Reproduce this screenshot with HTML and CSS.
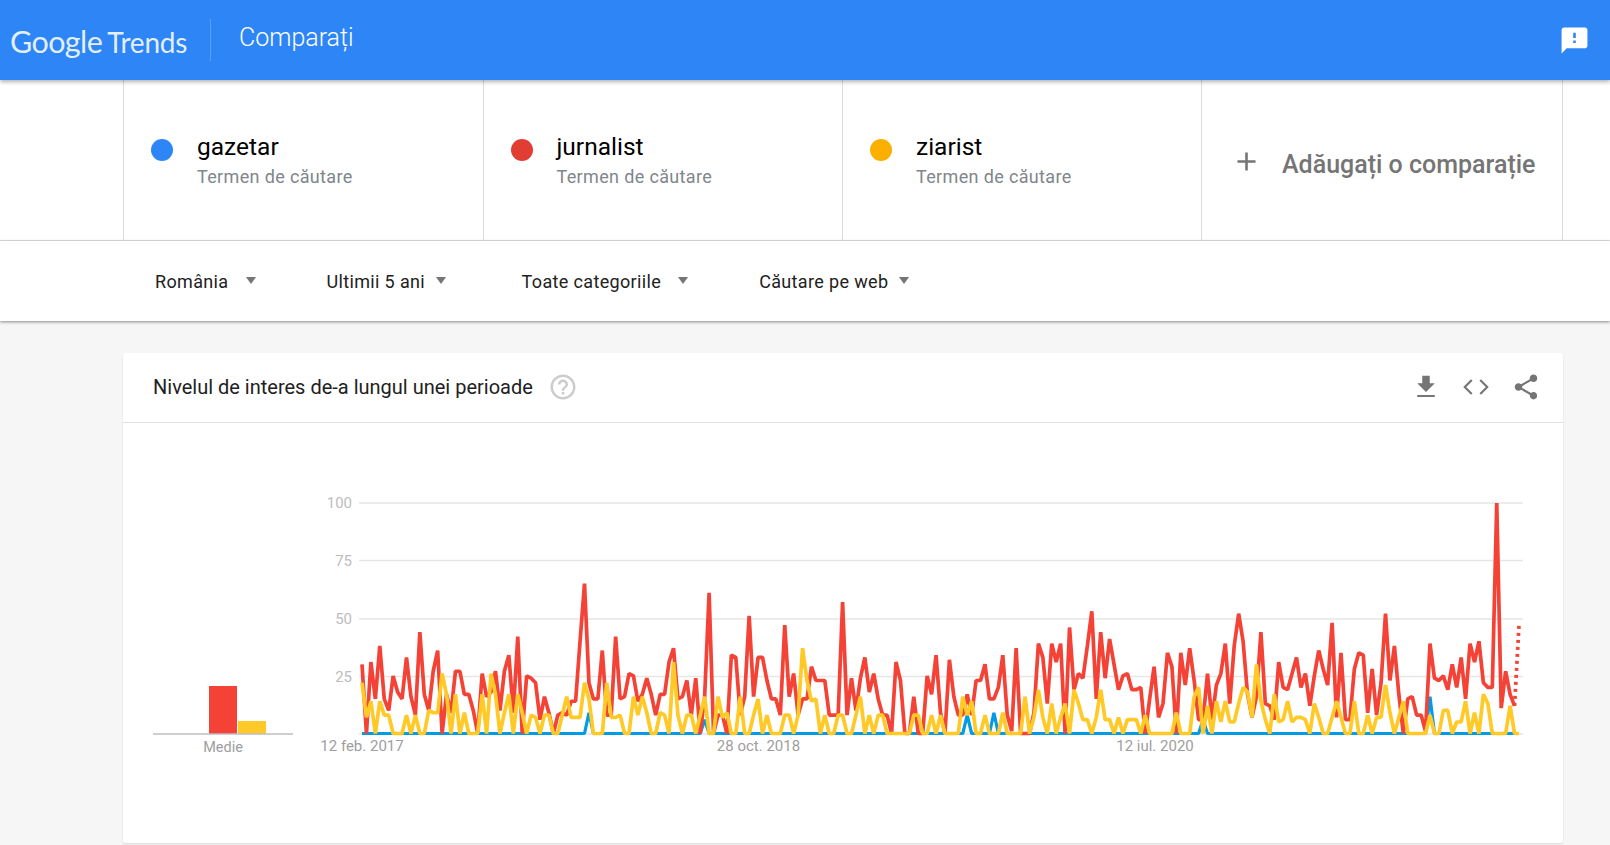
FILE: index.html
```html
<!DOCTYPE html>
<html lang="ro">
<head>
<meta charset="utf-8">
<title>Comparați - Google Trends</title>
<link rel="stylesheet" href="styles.css">
</head>
<body>
<header class="topbar">
  <div class="logo"><span class="logo-google">Google</span><span class="logo-trends">Trends</span></div>
  <div class="topbar-divider"></div>
  <h1 class="topbar-title">Comparați</h1>
  <svg class="feedback-icon" viewBox="0 0 24 24"><path d="M20 2H4c-1.1 0-1.99.9-1.99 2L2 22l4-4h14c1.1 0 2-.9 2-2V4c0-1.1-.9-2-2-2zm-7 12h-2v-2h2v2zm0-4h-2V6h2v4z"/></svg>
</header>

<section class="terms">
  <div class="term-row">
    <div class="term">
      <span class="dot dot-blue"></span>
      <div class="term-text"><div class="term-name">gazetar</div><div class="term-type">Termen de căutare</div></div>
    </div>
    <div class="term">
      <span class="dot dot-red"></span>
      <div class="term-text"><div class="term-name">jurnalist</div><div class="term-type">Termen de căutare</div></div>
    </div>
    <div class="term">
      <span class="dot dot-yellow"></span>
      <div class="term-text"><div class="term-name">ziarist</div><div class="term-type">Termen de căutare</div></div>
    </div>
    <div class="term term-add">
      <svg class="add-icon" viewBox="0 0 24 24"><path d="M19 13h-6v6h-2v-6H5v-2h6V5h2v6h6v2z"/></svg>
      <span class="add-label">Adăugați o comparație</span>
    </div>
  </div>
</section>

<nav class="filters">
  <div class="filter"><span>România</span><i class="arrow"></i></div>
  <div class="filter filter-tight"><span>Ultimii 5 ani</span><i class="arrow"></i></div>
  <div class="filter"><span>Toate categoriile</span><i class="arrow"></i></div>
  <div class="filter filter-tight"><span>Căutare pe web</span><i class="arrow"></i></div>
</nav>

<main class="content">
  <article class="card">
    <div class="card-head">
      <h2 class="card-title">Nivelul de interes de-a lungul unei perioade</h2>
      <svg class="help-icon" viewBox="0 0 24 24"><path d="M11 18h2v-2h-2v2zm1-16C6.48 2 2 6.48 2 12s4.48 10 10 10 10-4.48 10-10S17.52 2 12 2zm0 18c-4.41 0-8-3.59-8-8s3.59-8 8-8 8 3.59 8 8-3.59 8-8 8zm0-14c-2.21 0-4 1.79-4 4h2c0-1.1.9-2 2-2s2 .9 2 2c0 2-3 1.75-3 5h2c0-2.25 3-2.5 3-5 0-2.21-1.79-4-4-4z"/></svg>
      <div class="card-actions">
        <svg class="action-icon" viewBox="0 0 24 24"><path d="M19 9h-4V3H9v6H5l7 7 7-7zM5 18.4v1.6h14v-1.6H5z"/></svg>
        <svg class="action-icon" viewBox="0 0 24 24"><path class="code-stroke" d="M8.6 6.4L3 12l5.6 5.6M15.4 6.4L21 12l-5.6 5.6"/></svg>
        <svg class="action-icon" viewBox="0 0 24 24"><path d="M18 16.08c-.76 0-1.44.3-1.96.77L8.91 12.7c.05-.23.09-.46.09-.7s-.04-.47-.09-.7l7.05-4.11c.54.5 1.25.81 2.04.81 1.66 0 3-1.34 3-3s-1.34-3-3-3-3 1.34-3 3c0 .24.04.47.09.7L8.04 9.81C7.5 9.31 6.79 9 6 9c-1.66 0-3 1.34-3 3s1.34 3 3 3c.79 0 1.5-.31 2.04-.81l7.12 4.16c-.05.21-.08.43-.08.65 0 1.61 1.31 2.92 2.92 2.92 1.61 0 2.92-1.31 2.92-2.92s-1.31-2.92-2.92-2.92z"/></svg>
      </div>
    </div>
    <svg class="chart" viewBox="123 423 1440 420">
      <g class="grid">
        <line x1="359" x2="1523" y1="503" y2="503"/>
        <line x1="359" x2="1523" y1="560.5" y2="560.5"/>
        <line x1="359" x2="1523" y1="619" y2="619"/>
        <line x1="359" x2="1523" y1="676.5" y2="676.5"/>
        <line x1="359" x2="1523" y1="734" y2="734"/>
      </g>
      <g class="y-labels">
        <text x="352" y="508">100</text>
        <text x="352" y="566">75</text>
        <text x="352" y="624">50</text>
        <text x="352" y="682">25</text>
      </g>
      <g class="x-labels">
        <text x="362" y="751">12 feb. 2017</text>
        <text x="758.5" y="751">28 oct. 2018</text>
        <text x="1155" y="751">12 iul. 2020</text>
      </g>
      <rect class="bar-red" x="209" y="686" width="28" height="47.5"/>
      <rect class="bar-yellow" x="238" y="721" width="28" height="12.5"/>
      <line class="bar-axis" x1="153" x2="293" y1="734" y2="734"/>
      <text class="bar-label" x="223" y="752">Medie</text>
      <polyline id="line-blue" class="series series-blue"/>
      <polyline id="line-red" class="series series-red"/>
      <polyline id="line-red-partial" class="series series-red series-partial"/>
      <polyline id="line-yellow" class="series series-yellow"/>
    </svg>
  </article>
</main>
<script src="chart.js"></script>
</body>
</html>
```
FILE: styles.css
```css
* { box-sizing: border-box; }
html, body { margin: 0; height: 845px; overflow: hidden; }
body { background: #f6f6f6; font-family: Roboto, "Liberation Sans", sans-serif; color: #212121; }

.topbar {
  position: relative;
  z-index: 3;
  display: flex;
  align-items: center;
  height: 80px;
  padding: 0 20px 0 10px;
  background: #2e86f6;
  box-shadow: 0 2px 4px rgba(0, 0, 0, .3);
  color: #fff;
}
.logo { display: flex; align-items: baseline; gap: 5px; width: 200px; margin-top: 2px; font-family: Lato, sans-serif; color: rgba(255, 255, 255, .88); }
.logo-google { font-size: 30.5px; letter-spacing: -.6px; }
.logo-trends { font-size: 28px; letter-spacing: -.2px; }
.topbar-divider { width: 1px; height: 42px; background: rgba(255, 255, 255, .22); }
.topbar-title { margin: -4px 0 0 28px; font-size: 25px; font-weight: 300; line-height: 30px; }
.feedback-icon { width: 31px; height: 31px; margin-left: auto; fill: #fff; }

.terms { background: #fff; border-bottom: 1px solid #e0e0e0; height: 161px; padding-left: 123px; }
.term-row { display: flex; height: 160px; width: 1440px; }
.term {
  display: flex;
  align-items: center;
  width: 359.5px;
  padding-left: 27px;
  border-left: 1px solid #dcdcdc;
}
.dot { width: 22px; height: 22px; border-radius: 50%; margin: -20px 24px 0 0; flex: none; }
.dot-blue { background: #2e86f6; }
.dot-red { background: #e23d33; }
.dot-yellow { background: #fbb000; }
.term-text { margin-top: 2px; }
.term-name { font-size: 24.5px; line-height: 30px; color: #000; }
.term-type { font-size: 18px; line-height: 26px; margin-top: 2px; letter-spacing: .35px; color: #80868b; }
.term-add { width: 361.5px; flex: none; margin-left: -.5px; padding-left: 29px; border-right: 1px solid #dcdcdc; }
.add-icon { width: 31px; height: 31px; margin: 3px 20px 0 0; fill: #757575; }
.add-label { font-size: 25px; font-weight: 500; margin-top: 8px; color: #757575; }

.filters {
  position: relative;
  z-index: 2;
  display: flex;
  align-items: center;
  height: 80px;
  padding-left: 155px;
  background: #fff;
  box-shadow: 0 1px 3px rgba(0, 0, 0, .45);
  font-size: 18px;
  letter-spacing: .35px;
}
.filter { display: flex; align-items: center; gap: 17px; margin-right: 71px; }
.filter-tight { gap: 10.5px; margin-right: 76px; }
.arrow { width: 0; height: 0; border-left: 5.5px solid transparent; border-right: 5.5px solid transparent; border-top: 7px solid #757575; margin-top: -2px; }

.content { padding: 32px 47px 0 123px; }
.card { background: #fff; height: 490px; border-radius: 2px; box-shadow: 0 1px 2px rgba(0, 0, 0, .12); }
.card-head { display: flex; align-items: center; height: 70px; padding: 0 22px 0 30px; border-bottom: 1px solid #e0e0e0; }
.card-title { margin: -2px 0 0; font-size: 20px; font-weight: 400; color: #212121; }
.help-icon { width: 30px; height: 30px; margin: -2px 0 0 15px; fill: #ccc; }
.card-actions { display: flex; gap: 20px; margin: -2px 0 0 auto; }
.action-icon { width: 30px; height: 30px; fill: #757575; }
.code-stroke { fill: none; stroke: #757575; stroke-width: 1.7; }

.chart { display: block; width: 1440px; height: 420px; font-family: Roboto, sans-serif; font-size: 15px; }
.grid line { stroke: #e6e6e6; stroke-width: 1.5; }
.y-labels text { fill: #bdbdbd; text-anchor: end; }
.x-labels text, .bar-label { fill: #9e9e9e; text-anchor: middle; }
.bar-label { font-size: 14.5px; }
.bar-red { fill: #f44336; }
.bar-yellow { fill: #ffca28; }
.bar-axis { stroke: #9e9e9e; stroke-width: 1; }
.series { fill: none; stroke-width: 3.7; stroke-linejoin: bevel; }
.series-blue { stroke: #039be5; stroke-width: 3.2; }
.series-red { stroke: #f44336; }
.series-yellow { stroke: #ffca28; }
.series-partial { stroke-dasharray: 3 4; }
```
FILE: chart.js
```js
var red = [30,0,31,15,38,15,10,25,18,15,33,16,8,44,17,10,27,36,0,17,9,27,27,17,17,10,0,26,16,18,27,10,27,34,9,42,0,25,24,22,6,16,9,0,8,9,8,14,14,40,65,22,15,15,36,8,8,42,15,
16,26,25,14,17,24,17,8,17,17,31,37,15,16,23,8,24,0,16,61,0,8,8,0,34,33,8,16,51,16,33,33,23,15,15,8,47,16,26,8,15,15,29,23,23,23,8,8,8,57,8,24,10,24,33,18,26,15,8,8,0,31,23,0,0,16,0,0,25,17,34,9,0,32,16,8,8,17,8,23,23,30,15,15,20,34,8,1,37,0,0,0,9,39,33,13,39,31,39,0,46,19,26,24,38,53,15,44,
24,41,30,19,25,26,19,19,20,0,15,29,7,13,35,29,0,35,21,37,23,6,6,26,6,21,26,39,13,38,52,40,17,7,16,44,13,12,6,31,20,19,26,33,20,26,12,25,36,28,21,48,7,35,6,6,28,35,34,9,28,8,22,52,23,38,17,0,15,16,8,8,1,39,24,23,25,19,30,20,33,15,39,31,40,22,20,20,100,11,27,17,12];
var yellow = [22,7,14,0,14,8,8,0,0,0,8,0,8,0,0,10,9,9,26,17,0,17,0,9,0,0,0,17,0,26,17,0,9,17,0,17,9,0,8,7,0,8,8,0,0,8,16,7,7,7,22,15,0,0,0,22,7,7,
8,0,0,16,8,16,9,0,0,9,8,0,31,8,0,8,8,0,8,16,0,0,16,7,9,0,0,16,0,0,8,15,0,8,0,0,0,8,8,0,8,37,23,14,15,0,8,0,0,8,8,0,0,8,16,0,8,0,8,8,0,0,0,0,0,0,8,8,0,0,8,0,8,0,0,0,0,16,8,14,0,0,8,0,0,0,9,0,0,0,0,16,0,7,19,7,0,13,0,7,13,0,19,13,6,6,0,7,19,
6,6,0,7,0,6,6,6,0,8,0,0,0,0,0,0,9,0,0,0,16,20,0,12,0,14,5,14,5,5,13,20,18,7,30,14,6,0,17,5,6,14,5,7,7,6,0,13,7,0,0,7,14,7,0,0,14,0,0,8,0,7,7,21,9,0,7,14,0,0,0,0,0,8,0,0,10,10,0,5,5,14,0,9,0,17,13,0,0,0,0,12,0,0];
var blue = {51: 9, 77: 6, 136: 8, 142: 9, 189: 6, 240: 16};

function toPoints(values, start) {
  return values.map(function (v, i) {
    return (362 + 4.45 * (i + (start || 0))).toFixed(2) + ',' + (733.5 - v * 2.305).toFixed(2);
  }).join(' ');
}
var blueValues = [];
for (var i = 0; i <= 260; i++) blueValues.push(blue[i] || 0);
document.getElementById('line-blue').setAttribute('points', toPoints(blueValues));
document.getElementById('line-red').setAttribute('points', toPoints(red));
document.getElementById('line-red-partial').setAttribute('points', toPoints([red[red.length - 1], 47], red.length - 1));
document.getElementById('line-yellow').setAttribute('points', toPoints(yellow));
```
